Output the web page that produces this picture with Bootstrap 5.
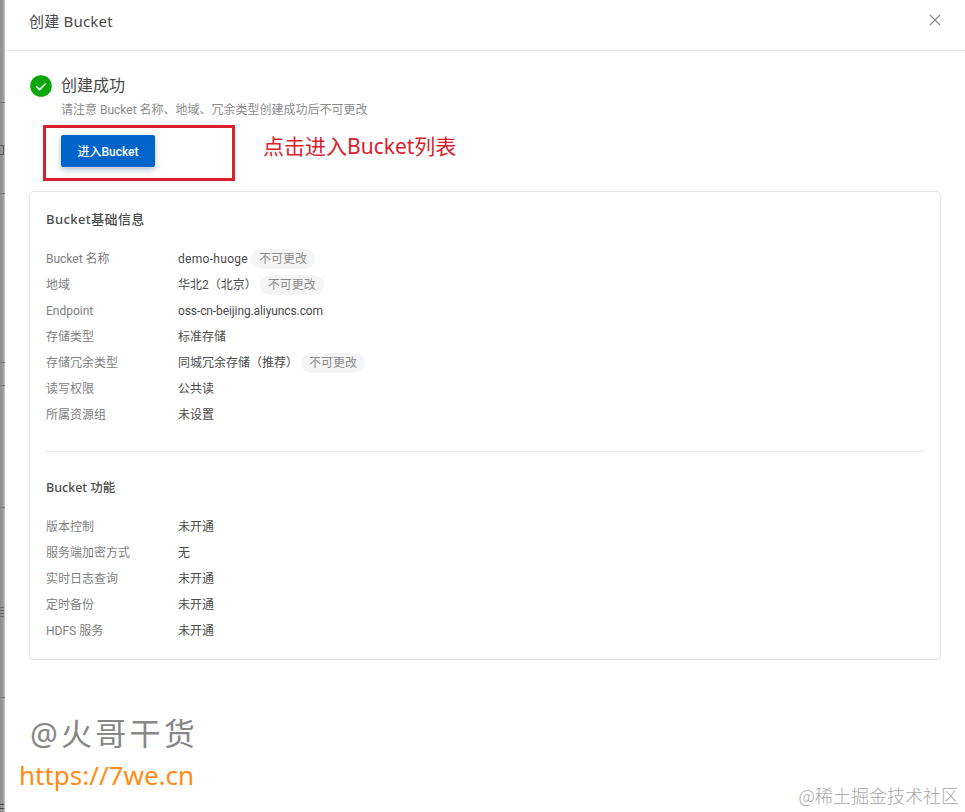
<!DOCTYPE html>
<html lang="zh">
<head>
<meta charset="utf-8">
<title>创建 Bucket</title>
<link rel="stylesheet" href="https://cdn.jsdelivr.net/npm/bootstrap@5.3.0/dist/css/bootstrap.min.css">
<style>
html,body{height:812px;overflow:hidden;background:#fff}
body{font-family:Roboto,"Noto Sans CJK SC",sans-serif;font-size:12px;color:#4a4a4a;position:relative}
.shell{height:812px;display:flex}
.side-strip{width:5px;flex:none;
 background:
  linear-gradient(#7e7e7e,#7e7e7e) 0 102px/100% 1px no-repeat,
  linear-gradient(#7e7e7e,#7e7e7e) 0 193px/100% 1px no-repeat,
  linear-gradient(#7e7e7e,#7e7e7e) 0 362px/100% 1px no-repeat,
  linear-gradient(#7e7e7e,#7e7e7e) 0 385px/100% 1px no-repeat,
  linear-gradient(#7e7e7e,#7e7e7e) 0 507px/100% 1px no-repeat,
  linear-gradient(#7e7e7e,#7e7e7e) 0 697px/100% 1px no-repeat,
  linear-gradient(#5a5a5a,#5a5a5a) 0 145px/4px 1px no-repeat,
  linear-gradient(#5a5a5a,#5a5a5a) 0 154px/4px 1px no-repeat,
  linear-gradient(#5a5a5a,#5a5a5a) 3px 145px/1px 10px no-repeat,
  linear-gradient(#666,#666) 0 607px/4px 1px no-repeat,
  linear-gradient(#666,#666) 0 610px/4px 1px no-repeat,
  linear-gradient(#666,#666) 0 613px/4px 1px no-repeat,
  linear-gradient(#666,#666) 0 616px/4px 1px no-repeat,
  linear-gradient(#444,#444) 0 804px/4px 1px no-repeat,
  linear-gradient(#444,#444) 0 808px/4px 1px no-repeat,
  linear-gradient(90deg,#8c8c8c,#a0a0a0 70%,#cfcfcf)}
.panel{flex:1;min-width:0;display:flex;flex-direction:column}
.panel-head{height:51px;border-bottom:1px solid #ebebeb;padding:0 24px 10px;display:flex;align-items:center;justify-content:space-between;font-size:15px;color:#4a4a4a}
.panel-head svg{display:block}
.panel-title{line-height:20px;margin-top:2px;letter-spacing:.2px;font-family:"Noto Sans","Noto Sans CJK SC",sans-serif}
.panel-body{padding:24px 24px 0}
.ok-row{display:flex;gap:9px;align-items:center;height:22px;padding-left:1px}
.ok-text{font-size:16px;color:#4a4a4a;line-height:22px;margin-top:-1px}
.ok-sub{padding-left:32px;color:#8c8c8c;margin-top:5px;line-height:17px}
.callout-row{display:flex;align-items:center;gap:28px;margin:6px 0 10px 14px}
.callout{width:192px;height:56px;border:3px solid #d9202c;padding:7px 0 0 15px}
.go-btn{width:94px;height:32px;background:#0064c8;color:#fff;border:0;border-radius:2px;font-size:12px;font-weight:500;padding:2px 0 0;box-shadow:0 3px 6px rgba(0,60,120,.3)}
.callout-note{font-size:21px;color:#d9202c;line-height:28px;margin-top:-15px;font-family:"Noto Sans","Noto Sans CJK SC",sans-serif}
.info-box{border:1px solid #e5e5e5;border-radius:4px;padding:16px 16px 0;height:469px;width:912px}
.sec-title{font-size:13px;font-weight:500;color:#4a4a4a;line-height:22px;margin-bottom:16px;letter-spacing:.4px;font-family:"Noto Sans","Noto Sans CJK SC",sans-serif}
.sec-title-two{margin-bottom:15px;font-size:12.5px;letter-spacing:0}
.kv{display:flex;height:26px;align-items:center}
.kv-key{width:132px;flex:none;color:#808080}
.kv-val{color:#4a4a4a}
.val-wide{letter-spacing:.3px}
.val-tight{letter-spacing:-.1px}
.lock-tag{background:#f5f5f5;color:#8c8c8c;border-radius:10px;padding:0 8px;line-height:20px;margin-left:3px}
.sep{border-top:1px solid #e8e8e8;margin:23px 0 25px;width:878px;opacity:1}
.mark-name{position:absolute;left:30px;top:713px;font-size:31px;line-height:40px;color:#888;letter-spacing:3.2px;font-family:"Noto Sans","Noto Sans CJK SC",sans-serif}
.mark-url{position:absolute;left:19px;top:758px;font-size:26px;line-height:34px;color:#ff8c14;font-family:"Noto Sans",sans-serif}
.mark-site{position:absolute;right:6px;top:784px;font-size:18px;line-height:22px;color:#a9a9a9;font-family:"Noto Sans CJK SC",sans-serif;font-weight:300}
</style>
</head>
<body>
<div class="shell">
  <div class="side-strip"></div>
  <div class="panel">
    <div class="panel-head">
      <span class="panel-title">创建 Bucket</span>
      <svg width="12" height="12" viewBox="0 0 12 12"><path d="M1 1l10 10M11 1L1 11" stroke="#8a8a8a" stroke-width="1.3" fill="none"/></svg>
    </div>
    <div class="panel-body">
      <div class="ok-row">
        <svg width="22" height="22" viewBox="0 0 22 22"><circle cx="11" cy="11" r="10.8" fill="#0aa60a"/><path d="M6.3 11.4l3.3 3.2 6-6.2" stroke="#fff" stroke-width="1.5" fill="none"/></svg>
        <span class="ok-text">创建成功</span>
      </div>
      <div class="ok-sub">请注意 Bucket 名称、地域、冗余类型创建成功后不可更改</div>
      <div class="callout-row">
        <div class="callout"><button type="button" class="btn go-btn">进入Bucket</button></div>
        <div class="callout-note">点击进入Bucket列表</div>
      </div>
      <div class="info-box">
        <div class="sec-title">Bucket基础信息</div>
        <div class="kv"><div class="kv-key">Bucket 名称</div><div class="kv-val val-wide">demo-huoge</div><span class="lock-tag">不可更改</span></div>
        <div class="kv"><div class="kv-key">地域</div><div class="kv-val">华北2（北京）</div><span class="lock-tag">不可更改</span></div>
        <div class="kv"><div class="kv-key">Endpoint</div><div class="kv-val val-tight">oss-cn-beijing.aliyuncs.com</div></div>
        <div class="kv"><div class="kv-key">存储类型</div><div class="kv-val">标准存储</div></div>
        <div class="kv"><div class="kv-key">存储冗余类型</div><div class="kv-val">同城冗余存储（推荐）</div><span class="lock-tag">不可更改</span></div>
        <div class="kv"><div class="kv-key">读写权限</div><div class="kv-val">公共读</div></div>
        <div class="kv"><div class="kv-key">所属资源组</div><div class="kv-val">未设置</div></div>
        <hr class="sep">
        <div class="sec-title sec-title-two">Bucket 功能</div>
        <div class="kv"><div class="kv-key">版本控制</div><div class="kv-val">未开通</div></div>
        <div class="kv"><div class="kv-key">服务端加密方式</div><div class="kv-val">无</div></div>
        <div class="kv"><div class="kv-key">实时日志查询</div><div class="kv-val">未开通</div></div>
        <div class="kv"><div class="kv-key">定时备份</div><div class="kv-val">未开通</div></div>
        <div class="kv"><div class="kv-key">HDFS 服务</div><div class="kv-val">未开通</div></div>
      </div>
    </div>
  </div>
</div>
<div class="mark-name">@火哥干货</div>
<div class="mark-url">https://7we.cn</div>
<div class="mark-site">@稀土掘金技术社区</div>
<script src="https://cdn.jsdelivr.net/npm/bootstrap@5.3.0/dist/js/bootstrap.bundle.min.js"></script>
</body>
</html>
